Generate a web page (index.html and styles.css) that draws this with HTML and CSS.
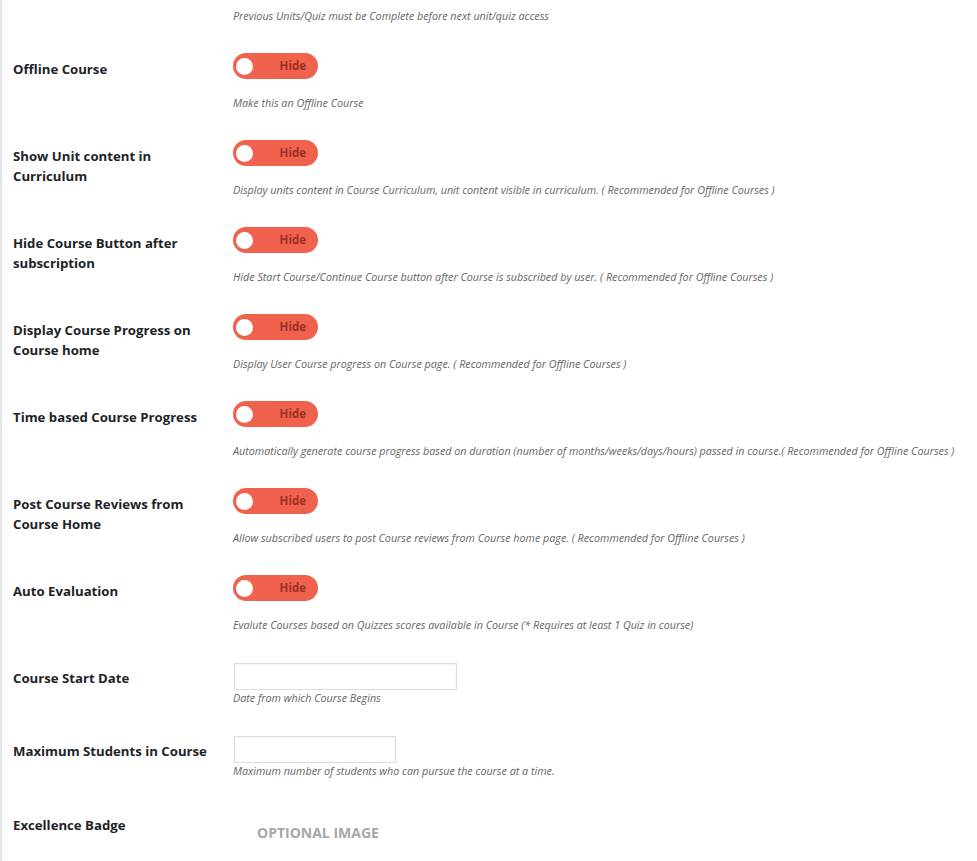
FILE: index.html
```html
<!DOCTYPE html>
<html>
<head>
<meta charset="utf-8">
<link rel="stylesheet" href="styles.css">
</head>
<body>
<div class="panel">
  <div class="row first">
    <div class="label"></div>
    <div class="control"><p class="desc">Previous Units/Quiz must be Complete before next unit/quiz access</p></div>
  </div>

  <div class="row">
    <div class="label">Offline Course</div>
    <div class="control">
      <div class="toggle"><span class="knob"></span><span class="tlabel">Hide</span></div>
      <p class="desc gap">Make this an Offline Course</p>
    </div>
  </div>

  <div class="row">
    <div class="label">Show Unit content in Curriculum</div>
    <div class="control">
      <div class="toggle"><span class="knob"></span><span class="tlabel">Hide</span></div>
      <p class="desc gap">Display units content in Course Curriculum, unit content visible in curriculum. ( Recommended for Offline Courses )</p>
    </div>
  </div>

  <div class="row">
    <div class="label">Hide Course Button after subscription</div>
    <div class="control">
      <div class="toggle"><span class="knob"></span><span class="tlabel">Hide</span></div>
      <p class="desc gap">Hide Start Course/Continue Course button after Course is subscribed by user. ( Recommended for Offline Courses )</p>
    </div>
  </div>

  <div class="row">
    <div class="label">Display Course Progress on Course home</div>
    <div class="control">
      <div class="toggle"><span class="knob"></span><span class="tlabel">Hide</span></div>
      <p class="desc gap">Display User Course progress on Course page. ( Recommended for Offline Courses )</p>
    </div>
  </div>

  <div class="row">
    <div class="label">Time based Course Progress</div>
    <div class="control">
      <div class="toggle"><span class="knob"></span><span class="tlabel">Hide</span></div>
      <p class="desc gap">Automatically generate course progress based on duration (number of months/weeks/days/hours) passed in course.( Recommended for Offline Courses )</p>
    </div>
  </div>

  <div class="row">
    <div class="label">Post Course Reviews from Course Home</div>
    <div class="control">
      <div class="toggle"><span class="knob"></span><span class="tlabel">Hide</span></div>
      <p class="desc gap">Allow subscribed users to post Course reviews from Course home page. ( Recommended for Offline Courses )</p>
    </div>
  </div>

  <div class="row">
    <div class="label">Auto Evaluation</div>
    <div class="control">
      <div class="toggle"><span class="knob"></span><span class="tlabel">Hide</span></div>
      <p class="desc gap">Evalute Courses based on Quizzes scores available in Course (* Requires at least 1 Quiz in course)</p>
    </div>
  </div>

  <div class="row field">
    <div class="label">Course Start Date</div>
    <div class="control">
      <input class="text date" type="text">
      <p class="desc">Date from which Course Begins</p>
    </div>
  </div>

  <div class="row field">
    <div class="label">Maximum Students in Course</div>
    <div class="control">
      <input class="text small" type="text">
      <p class="desc">Maximum number of students who can pursue the course at a time.</p>
    </div>
  </div>

  <div class="row badge">
    <div class="label">Excellence Badge</div>
    <div class="control">
      <div class="optional">OPTIONAL IMAGE</div>
    </div>
  </div>
</div>
</body>
</html>
```

FILE: styles.css
```css
html, body {
  margin: 0;
  padding: 0;
  background: #ffffff;
}

body {
  font-family: "Open Sans", "Noto Sans", sans-serif;
  color: #23282d;
  height: 861px;
  overflow: hidden;
}

.panel {
  border-left: 2px solid #e5e5e5;
  min-height: 861px;
  padding-left: 11px;
  box-sizing: border-box;
}

.row {
  display: grid;
  grid-template-columns: 220px 1fr;
  margin-bottom: 30px;
}

.row.first {
  padding-top: 9px;
}

.label {
  font-size: 13.2px;
  font-weight: 700;
  line-height: 20px;
  padding-top: 6px;
  padding-right: 20px;
  color: #1d2327;
}

.control {
  display: flex;
  flex-direction: column;
  align-items: flex-start;
}

.desc {
  margin: 0;
  font-size: 10.75px;
  font-style: italic;
  line-height: 14px;
  color: #666666;
  white-space: nowrap;
}

.desc.gap {
  margin-top: 17px;
}

.toggle {
  width: 85px;
  height: 26px;
  border-radius: 13px;
  background: #f0624d;
  display: flex;
  align-items: center;
  justify-content: space-between;
  padding: 0 12px 0 3px;
  box-sizing: border-box;
}

.knob {
  width: 17px;
  height: 17px;
  border-radius: 50%;
  background: #ffffff;
}

.tlabel {
  font-size: 11.5px;
  font-weight: 700;
  color: #9c3024;
  line-height: 1;
}

.row.field {
  padding-top: 1px;
}

.row.field .label {
  padding-top: 5px;
}

.row.field .desc {
  margin-top: 1px;
}

.text {
  display: block;
  height: 27px;
  border: 1px solid #dddddd;
  box-shadow: inset 0 1px 2px rgba(0, 0, 0, 0.06);
  background: #ffffff;
  box-sizing: border-box;
  margin: 0 0 0 1px;
  padding: 0 6px;
}

.text.date {
  width: 223px;
}

.text.small {
  width: 162px;
}

.row.badge {
  padding-top: 1px;
}

.optional {
  margin-left: 24px;
  margin-top: 14px;
  font-size: 14px;
  font-weight: 700;
  color: #a7a7a7;
}
```
